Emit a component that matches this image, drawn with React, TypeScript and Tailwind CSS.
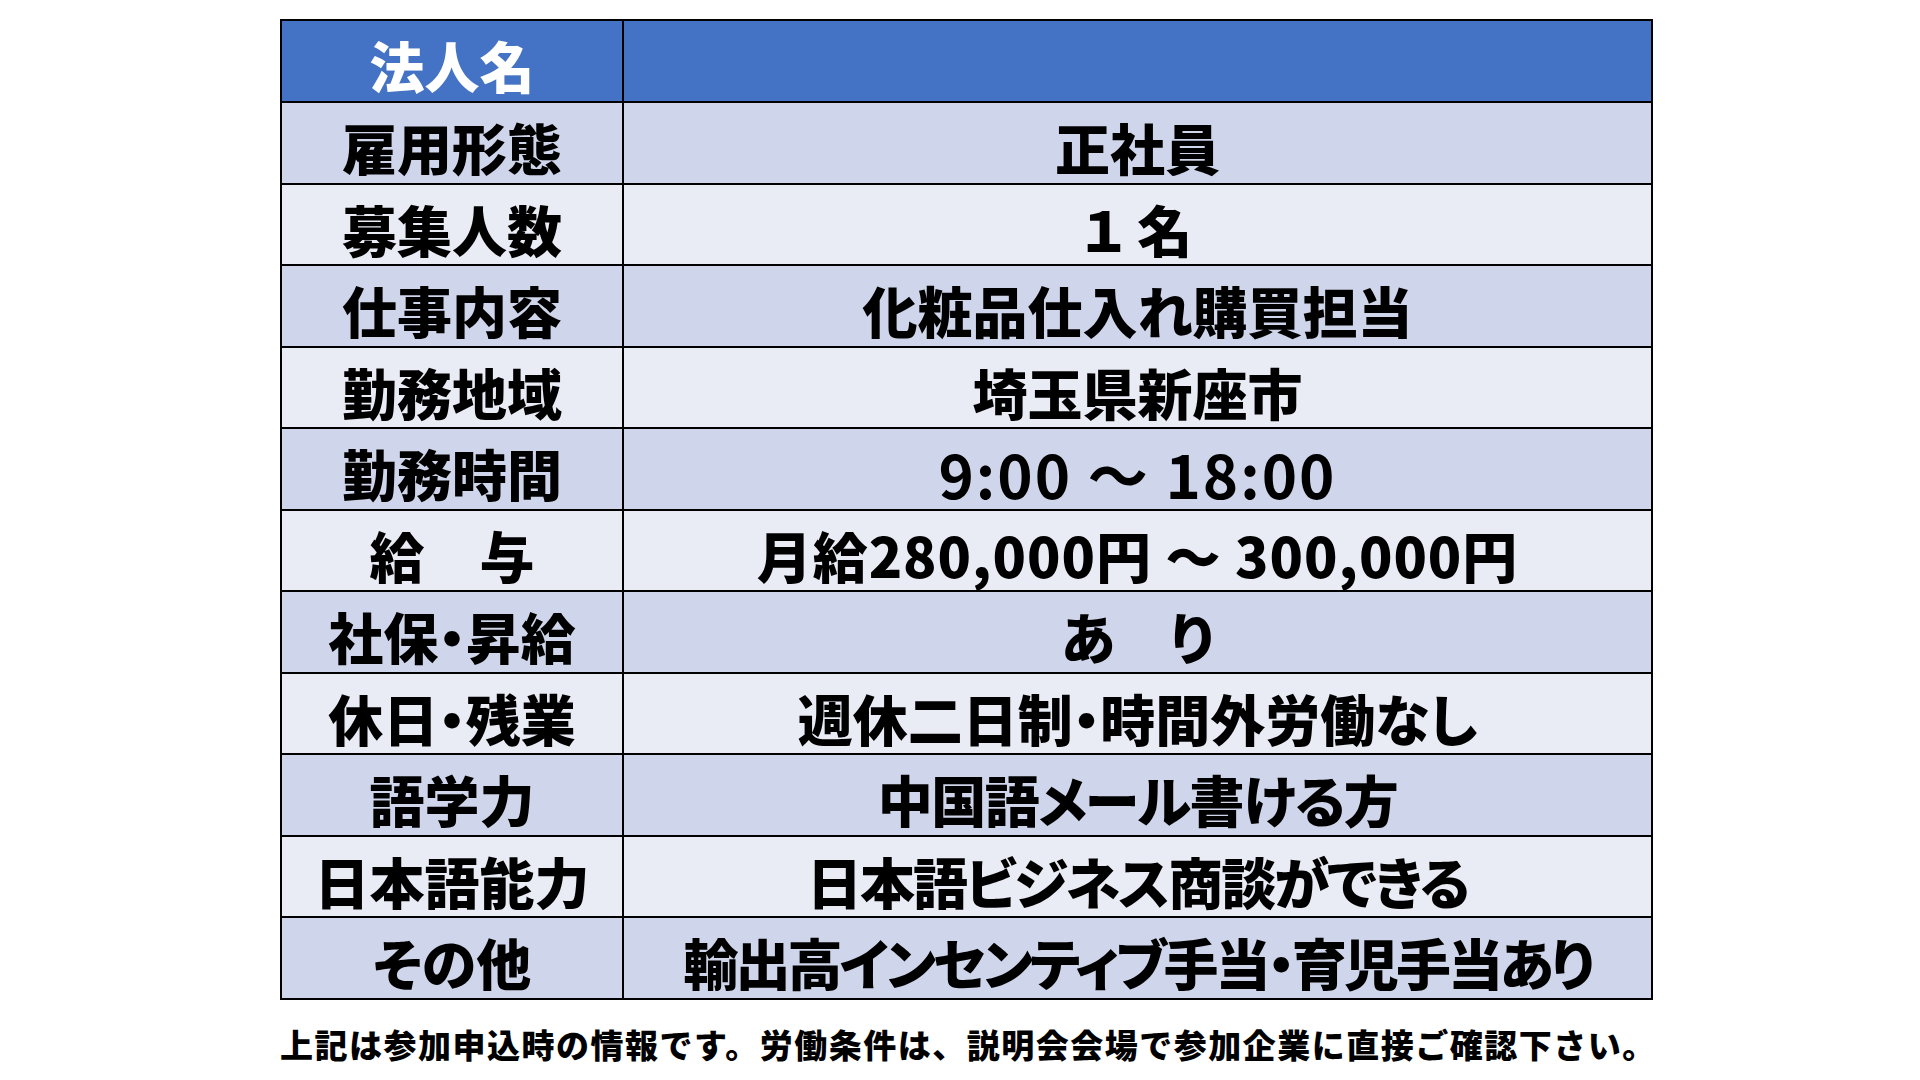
const ROWS: { label: string; value: string; tone: "dark" | "light"; cls?: string }[] = [
  { label: "雇用形態", value: "正社員", tone: "dark" },
  { label: "募集人数", value: "１ 名", tone: "light" },
  { label: "仕事内容", value: "化粧品仕入れ購買担当", tone: "dark" },
  { label: "勤務地域", value: "埼玉県新座市", tone: "light" },
  { label: "勤務時間", value: "9:00 ～ 18:00", tone: "dark", cls: "text-[60px] font-semibold tracking-[2px]" },
  { label: "給　与", value: "月給280,000円 ～ 300,000円", tone: "light", cls: "text-[55px] font-black tracking-[1px]" },
  { label: "社保・昇給", value: "あ　り", tone: "dark" },
  { label: "休日・残業", value: "週休二日制・時間外労働なし", tone: "light" },
  { label: "語学力", value: "中国語メール書ける方", tone: "dark", cls: "text-[55px] font-black tracking-[-1.5px]" },
  { label: "日本語能力", value: "日本語ビジネス商談ができる", tone: "light", cls: "text-[55px] font-black tracking-[-2px]" },
  { label: "その他", value: "輸出高インセンティブ手当・育児手当あり", tone: "dark", cls: "text-[55px] font-black tracking-[-3px]" },
];

const JP = "font-['Noto_Sans_CJK_JP','Noto_Sans',sans-serif]";

export default function App() {
  return (
    <div className={`h-[1080px] w-[1920px] bg-white pt-[19px] text-black ${JP}`}>
      <div className="ml-[280px] w-[1373px] border-2 border-black [font-feature-settings:'palt']">
        <div className="grid h-[80px] grid-cols-[342px_1fr] bg-[#4472C4]">
          <div className="flex items-center justify-center border-r-2 border-black pt-[6px] text-[55px] font-black leading-none text-white">
            法人名
          </div>
          <div />
        </div>
        {ROWS.map((r) => (
          <div
            key={r.label}
            className={`grid h-[81.5px] grid-cols-[342px_1fr] border-t-2 border-black ${
              r.tone === "dark" ? "bg-[#CFD5EA]" : "bg-[#E9EBF5]"
            }`}
          >
            <div className="flex items-center justify-center whitespace-pre border-r-2 border-black pt-[8px] text-[55px] font-black leading-none">
              {r.label}
            </div>
            <div
              className={`flex items-center justify-center whitespace-pre pt-[8px] leading-none ${
                r.cls ?? "text-[55px] font-black"
              }`}
            >
              {r.value}
            </div>
          </div>
        ))}
      </div>
      <p className="ml-[280px] mt-[28px] text-[33px] font-black leading-none tracking-[1.5px]">
        上記は参加申込時の情報です。労働条件は、説明会会場で参加企業に直接ご確認下さい。
      </p>
    </div>
  );
}
